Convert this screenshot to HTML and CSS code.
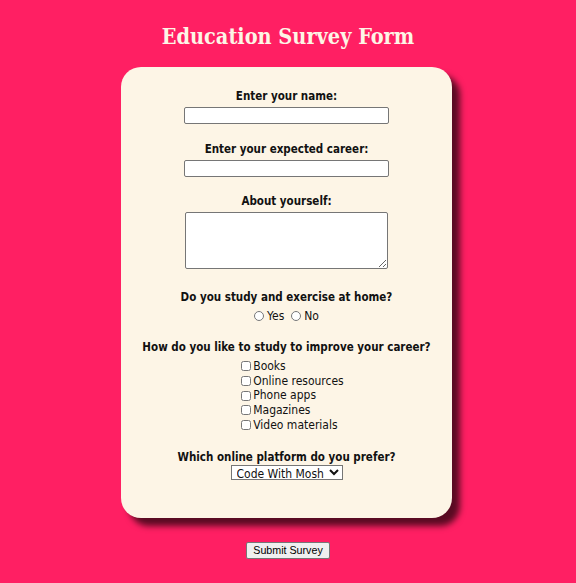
FILE: index.html
```html
<!DOCTYPE html>
<html lang="en">
<head>
<meta charset="utf-8">
<title>Education Survey Form</title>
<link rel="stylesheet" href="styles.css">
</head>
<body>
<h1 class="title">Education Survey Form</h1>
<form class="survey">
  <div class="card">
    <div class="group group-text">
      <label class="q" for="name">Enter your name:</label>
      <input class="text" type="text" id="name">
    </div>
    <div class="group group-text">
      <label class="q" for="career">Enter your expected career:</label>
      <input class="text" type="text" id="career">
    </div>
    <div class="group group-area">
      <label class="q" for="about">About yourself:</label>
      <textarea class="area" id="about"></textarea>
    </div>
    <div class="group group-radio">
      <p class="q">Do you study and exercise at home?</p>
      <div class="radios">
        <label class="opt"><input class="radio" type="radio" name="home">Yes</label>
        <label class="opt"><input class="radio" type="radio" name="home">No</label>
      </div>
    </div>
    <div class="group group-check">
      <p class="q">How do you like to study to improve your career?</p>
      <div class="checks">
        <label class="opt"><input class="check" type="checkbox">Books</label>
        <label class="opt"><input class="check" type="checkbox">Online resources</label>
        <label class="opt"><input class="check" type="checkbox">Phone apps</label>
        <label class="opt"><input class="check" type="checkbox">Magazines</label>
        <label class="opt"><input class="check" type="checkbox">Video materials</label>
      </div>
    </div>
    <div class="group">
      <label class="q q-tight" for="platform">Which online platform do you prefer?</label>
      <select class="select" id="platform">
        <option>Code With Mosh</option>
        <option>Udemy</option>
        <option>Coursera</option>
      </select>
    </div>
  </div>
  <div class="actions">
    <button class="submit" type="submit">Submit Survey</button>
  </div>
</form>
</body>
</html>
```

FILE: styles.css
```css
html, body {
  margin: 0;
  padding: 0;
}
body {
  background: #ff1f63;
  font-family: "DejaVu Sans Condensed", "DejaVu Sans", Verdana, sans-serif;
  font-size: 12px;
  color: #111;
}
.title {
  margin: 0;
  padding-top: 22px;
  text-align: center;
  font-family: "DejaVu Serif Condensed", "DejaVu Serif", serif;
  font-weight: bold;
  font-size: 21.5px;
  line-height: 30px;
  color: #fdf5e6;
}
.survey {
  display: flex;
  flex-direction: column;
  align-items: center;
}
.card {
  margin-top: 15px;
  margin-left: -3px;
  width: 331px;
  height: 451px;
  box-sizing: border-box;
  padding-top: 22px;
  background: #fdf5e6;
  border-radius: 20px;
  box-shadow: 8px 8px 6px rgba(0, 0, 0, 0.65);
  display: flex;
  flex-direction: column;
  align-items: center;
}
.group {
  display: flex;
  flex-direction: column;
  align-items: center;
  margin-bottom: 18px;
}
.group-text {
  margin-bottom: 17.5px;
}
.group-area {
  margin-bottom: 21px;
}
.group-radio {
  margin-bottom: 16px;
}
.group-check {
  margin-bottom: 17px;
}
.q {
  margin: 0;
  font-weight: bold;
  font-size: 11.5px;
  line-height: 15px;
  margin-bottom: 3px;
}
.q-tight {
  margin-bottom: 0;
}
.text {
  box-sizing: border-box;
  width: 205px;
  height: 17px;
  margin: 0;
  border: 1px solid #767676;
  border-radius: 2px;
  background: #fff;
}
.area {
  box-sizing: border-box;
  width: 203px;
  height: 57px;
  margin: 0;
  border: 1px solid #767676;
  border-radius: 2px;
  background: #fff;
}
.radios {
  display: flex;
  gap: 7px;
  margin-top: 1px;
}
.checks {
  display: flex;
  flex-direction: column;
  align-items: flex-start;
  margin-top: 1px;
  padding-left: 12px;
}
.opt {
  display: flex;
  align-items: center;
  font-size: 12px;
  line-height: 14.75px;
}
.radio, .check {
  width: 10px;
  height: 10px;
  margin: 0 3px 0 0;
}
.check {
  margin-right: 2px;
}
.select {
  font-family: "DejaVu Sans Condensed", "DejaVu Sans", Verdana, sans-serif;
  font-size: 12px;
  height: 15px;
  padding: 0 1px;
  border: 1px solid #767676;
  border-radius: 0;
  background: #fff;
  color: #111;
}
.actions {
  margin-top: 24px;
  display: flex;
  justify-content: center;
}
.submit {
  font-family: "Liberation Sans", Arial, sans-serif;
  font-size: 10.7px;
  padding: 1px 6px;
  height: 17px;
  line-height: 13px;
  border: 1px solid #767676;
  border-radius: 2px;
  background: #efefef;
  color: #000;
}
```
